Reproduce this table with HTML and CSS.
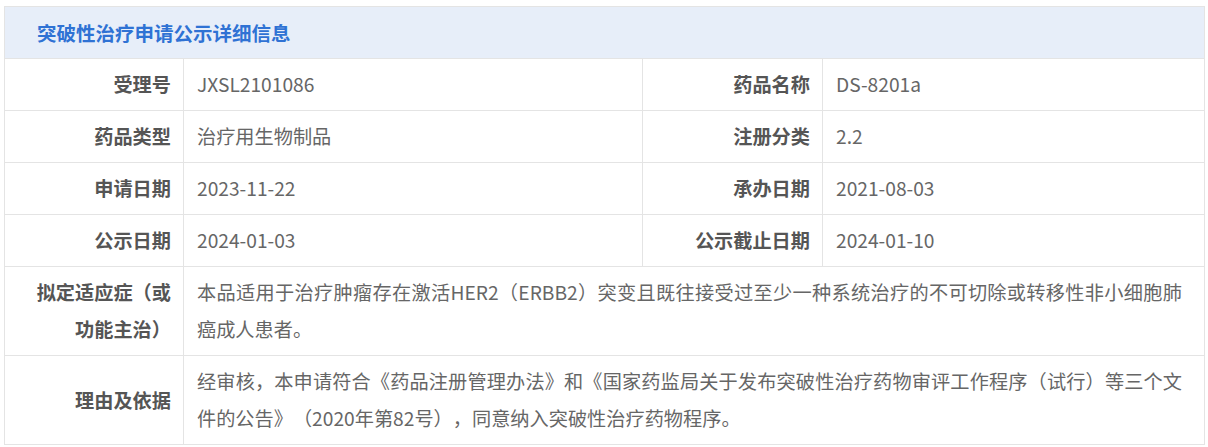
FILE: index.html
```html
<!DOCTYPE html>
<html lang="zh-CN">
<head>
<meta charset="utf-8">
<title>突破性治疗申请公示详细信息</title>
<link rel="stylesheet" href="styles.css">
</head>
<body>
<div class="panel">
  <table class="detail">
    <colgroup>
      <col class="c-label1">
      <col class="c-value1">
      <col class="c-label2">
      <col class="c-value2">
    </colgroup>
    <thead>
      <tr>
        <th class="title" colspan="4">突破性治疗申请公示详细信息</th>
      </tr>
    </thead>
    <tbody>
      <tr>
        <th class="label">受理号</th>
        <td class="value">JXSL2101086</td>
        <th class="label">药品名称</th>
        <td class="value">DS-8201a</td>
      </tr>
      <tr>
        <th class="label">药品类型</th>
        <td class="value">治疗用生物制品</td>
        <th class="label">注册分类</th>
        <td class="value">2.2</td>
      </tr>
      <tr>
        <th class="label">申请日期</th>
        <td class="value">2023-11-22</td>
        <th class="label">承办日期</th>
        <td class="value">2021-08-03</td>
      </tr>
      <tr>
        <th class="label">公示日期</th>
        <td class="value">2024-01-03</td>
        <th class="label">公示截止日期</th>
        <td class="value">2024-01-10</td>
      </tr>
      <tr>
        <th class="label">拟定适应症（或功能主治）</th>
        <td class="value long" colspan="3">本品适用于治疗肿瘤存在激活HER2（ERBB2）突变且既往接受过至少一种系统治疗的不可切除或转移性非小细胞肺癌成人患者。</td>
      </tr>
      <tr>
        <th class="label">理由及依据</th>
        <td class="value long" colspan="3">经审核，本申请符合《药品注册管理办法》和《国家药监局关于发布突破性治疗药物审评工作程序（试行）等三个文件的公告》（2020年第82号），同意纳入突破性治疗药物程序。</td>
      </tr>
    </tbody>
  </table>
</div>
</body>
</html>
```

FILE: styles.css
```css
html, body {
  margin: 0;
  padding: 0;
  background: #ffffff;
}

body {
  font-family: "Noto Sans CJK SC", "Noto Sans", sans-serif;
  font-size: 19.2px;
  color: #666666;
}

.panel {
  margin: 6px 0 0 4px;
  width: 1200px;
}

.detail {
  width: 1200px;
  table-layout: fixed;
  border-collapse: collapse;
  border: 1px solid #e4e4e4;
}

.c-label1 { width: 179px; }
.c-value1 { width: 459px; }
.c-label2 { width: 180px; }
.c-value2 { width: 382px; }

.detail th,
.detail td {
  border: 1px solid #e4e4e4;
  line-height: 37px;
  padding: 7px 13px;
  vertical-align: middle;
}

.detail .title {
  background: #e7eef9;
  color: #2f72d4;
  font-size: 19.5px;
  font-weight: 700;
  text-align: left;
  padding: 7px 32px;
}

.detail .label {
  text-align: right;
  font-weight: 700;
  color: #555555;
  padding-left: 20px;
  padding-right: 12px;
}

.detail .value {
  text-align: left;
  color: #666666;
  font-weight: 400;
}

.detail .long {
  text-align: justify;
  text-spacing-trim: space-all;
  padding-right: 22px;
}
```
